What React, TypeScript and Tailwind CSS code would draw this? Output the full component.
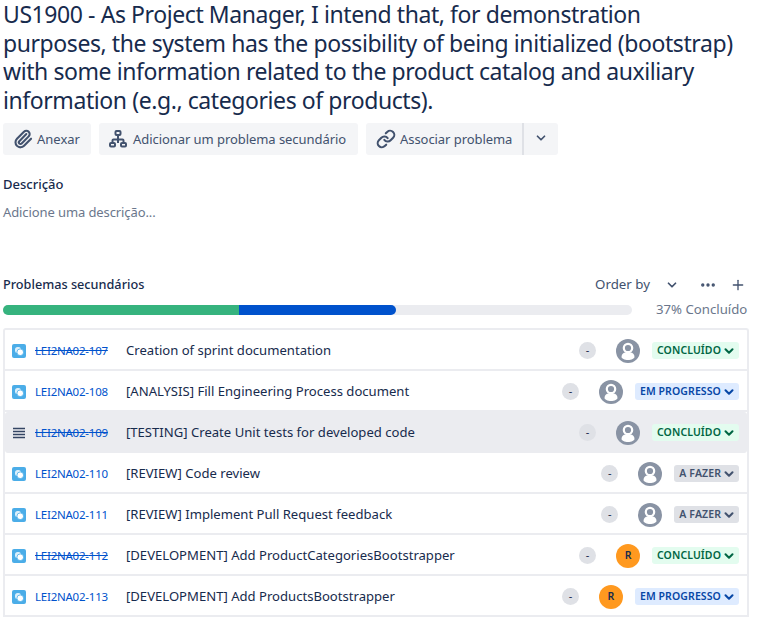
import { ChevronDown, Ellipsis, Link, Paperclip, Plus } from 'lucide-react'

type Row = {
  id: number
  title: string
  done: boolean
  status: 'done' | 'progress' | 'todo'
  user?: boolean
  highlight?: boolean
}

const rows: Row[] = [
  { id: 107, title: 'Creation of sprint documentation', done: true, status: 'done' },
  { id: 108, title: '[ANALYSIS] Fill Engineering Process document', done: false, status: 'progress' },
  { id: 109, title: '[TESTING] Create Unit tests for developed code', done: true, status: 'done', highlight: true },
  { id: 110, title: '[REVIEW] Code review', done: false, status: 'todo' },
  { id: 111, title: '[REVIEW] Implement Pull Request feedback', done: false, status: 'todo' },
  { id: 112, title: '[DEVELOPMENT] Add ProductCategoriesBootstrapper', done: true, status: 'done', user: true },
  { id: 113, title: '[DEVELOPMENT] Add ProductsBootstrapper', done: false, status: 'progress', user: true },
]

const lozenges = {
  done: { label: 'CONCLUÍDO', className: 'bg-[#e3fcef] text-[#006644]' },
  progress: { label: 'EM PROGRESSO', className: 'bg-[#deebff] text-[#0747a6]' },
  todo: { label: 'A FAZER', className: 'bg-[#dfe1e6] text-[#42526e]' },
}

function SubtaskIcon() {
  return (
    <svg width="14" height="14" viewBox="0 0 14 14" className="shrink-0">
      <rect width="14" height="14" rx="2" fill="#4bade8" />
      <rect x="3" y="3" width="6" height="6" rx="2.5" fill="#ffffff" opacity="0.8" />
      <rect x="5" y="5" width="6.500" height="6.500" rx="3" fill="#ffffff" stroke="#4bade8" strokeWidth="0.8" />
    </svg>
  )
}

function DragIcon() {
  return (
    <svg width="14" height="14" viewBox="0 0 14 14" className="shrink-0">
      <path d="M1 3h12M1 6h12M1 9h12M1 12h12" stroke="#344563" strokeWidth="1.3" transform="translate(0 -0.5)" />
    </svg>
  )
}

function HierarchyIcon() {
  return (
    <svg width="20" height="20" viewBox="0 0 20 20" className="shrink-0" fill="none" stroke="#42526e" strokeWidth="2">
      <rect x="7.500" y="2" width="5" height="4" rx="1" />
      <rect x="2" y="14" width="5" height="3.500" rx="1" />
      <rect x="13" y="14" width="5" height="3.500" rx="1" />
      <path d="M10 6v8M4.500 14v-2.500a1 1 0 0 1 1-1h9a1 1 0 0 1 1 1V14" />
    </svg>
  )
}

function DefaultAvatar() {
  return (
    <svg width="24" height="24" viewBox="0 0 24 24" className="shrink-0">
      <circle cx="12" cy="12" r="12" fill="#8993a4" />
      <circle cx="12" cy="9" r="4.200" fill="none" stroke="#ffffff" strokeWidth="2.200" />
      <path d="M5.500 18c0-3 2-4.500 4-4.500h5c2 0 4 1.500 4 4.500 0 1.500-3 3-6.500 3s-6.500-1.500-6.500-3z" fill="#ffffff" />
    </svg>
  )
}

export default function App() {
  return (
    <div className="h-[617px] w-[760px] overflow-hidden bg-white pl-[3px] pr-[11px] font-['Noto_Sans',sans-serif] text-[#172b4d]">
      <h1 className="text-[23px] leading-[28.5px] tracking-[-0.42px]">
        US1900 - As Project Manager, I intend that, for demonstration purposes, the system has the possibility of being initialized (bootstrap) with some information related to the product catalog and auxiliary information (e.g., categories of products).
      </h1>

      <div className="mt-[9px] flex gap-2 text-[13px] text-[#42526e]">
        <button className="flex h-8 w-[88px] items-center gap-[4px] rounded-[3px] bg-[#f4f5f7] pl-[10px]">
          <Paperclip size={20} strokeWidth={2.5} />
          <span className="pt-[2px]">Anexar</span>
        </button>
        <button className="flex h-8 w-[259px] items-center gap-[5px] rounded-[3px] bg-[#f4f5f7] pl-[9px]">
          <HierarchyIcon />
          <span className="pt-[2px] tracking-[-0.06px]">Adicionar um problema secundário</span>
        </button>
        <div className="flex h-8 w-[192px] rounded-[3px] bg-[#f4f5f7]">
          <button className="flex w-[158px] items-center gap-[4px] border-r-2 border-[#dfe1e6] pl-[10px]">
            <Link size={20} strokeWidth={2.5} />
            <span className="pt-[2px] tracking-[-0.06px]">Associar problema</span>
          </button>
          <button className="flex flex-1 items-center justify-center">
            <ChevronDown size={14} strokeWidth={3} className="-mt-0.5" />
          </button>
        </div>
      </div>

      <h2 className="mt-[20px] text-[13px] leading-[18px] font-medium">Descrição</h2>
      <p className="mt-[10px] text-[13px] leading-[18px] tracking-[-0.1px] text-[#6b778c]">Adicione uma descrição...</p>

      <div className="mt-[54px] flex h-5 items-center text-[12.7px]">
        <h2 className="font-medium">Problemas secundários</h2>
        <div className="mr-[3px] ml-auto flex items-center text-[#42526e]">
          <span className="text-[13.3px]">Order by</span>
          <ChevronDown size={14} strokeWidth={3} className="ml-[15px]" />
          <Ellipsis size={18} strokeWidth={2.5} className="ml-[20px]" />
          <Plus size={16} strokeWidth={2} className="ml-[13px]" />
        </div>
      </div>

      <div className="mt-[10px] flex h-[10px] items-center">
        <div className="flex h-[10px] w-[629px] overflow-hidden rounded-full bg-[#ebecf0]">
          <div className="h-full w-[236px] bg-[#36b37e]" />
          <div className="h-full w-[157px] rounded-r-full bg-[#0052cc]" />
        </div>
        <span className="ml-[24px] whitespace-nowrap text-[13.2px] text-[#6b778c]">37% Concluído</span>
      </div>

      <div className="mt-[13px] w-[746px] rounded-t-[3px] border-x-2 border-t-2 border-[#ebecf0]">
        {rows.map((row) => {
          const lozenge = lozenges[row.status]
          return (
            <div
              key={row.id}
              className={`flex h-[41px] items-center border-b-2 pt-[2px] pr-[8px] pl-[7px] ${
                row.highlight ? 'rounded-[3px] border-transparent bg-[#ebecf0]' : 'border-[#ebecf0]'
              }`}
            >
              {row.highlight ? <DragIcon /> : <SubtaskIcon />}
              <span className={`ml-[9px] w-[91px] shrink-0 text-[11.5px] tracking-[-0.23px] text-[#0052cc] ${row.done ? 'line-through' : ''}`}>
                LEI2NA02-{row.id}
              </span>
              <span className="text-[13.1px] whitespace-nowrap">{row.title}</span>
              <span className="mr-[20px] ml-auto flex h-[17px] w-[17px] items-center justify-center rounded-full bg-[#dfe1e6] text-[11px]">
                -
              </span>
              {row.user ? (
                <span className="flex h-6 w-6 items-center justify-center rounded-full bg-[#ff991f] text-[10.5px] font-semibold">
                  R
                </span>
              ) : (
                <DefaultAvatar />
              )}
              <span className={`ml-3 flex h-[17px] items-center gap-[1px] rounded-[3px] pr-[3px] pl-[5px] text-[10.5px] font-semibold tracking-[0.1px] ${lozenge.className}`}>
                {lozenge.label}
                <ChevronDown size={14} strokeWidth={3.5} />
              </span>
            </div>
          )
        })}
      </div>
    </div>
  )
}
